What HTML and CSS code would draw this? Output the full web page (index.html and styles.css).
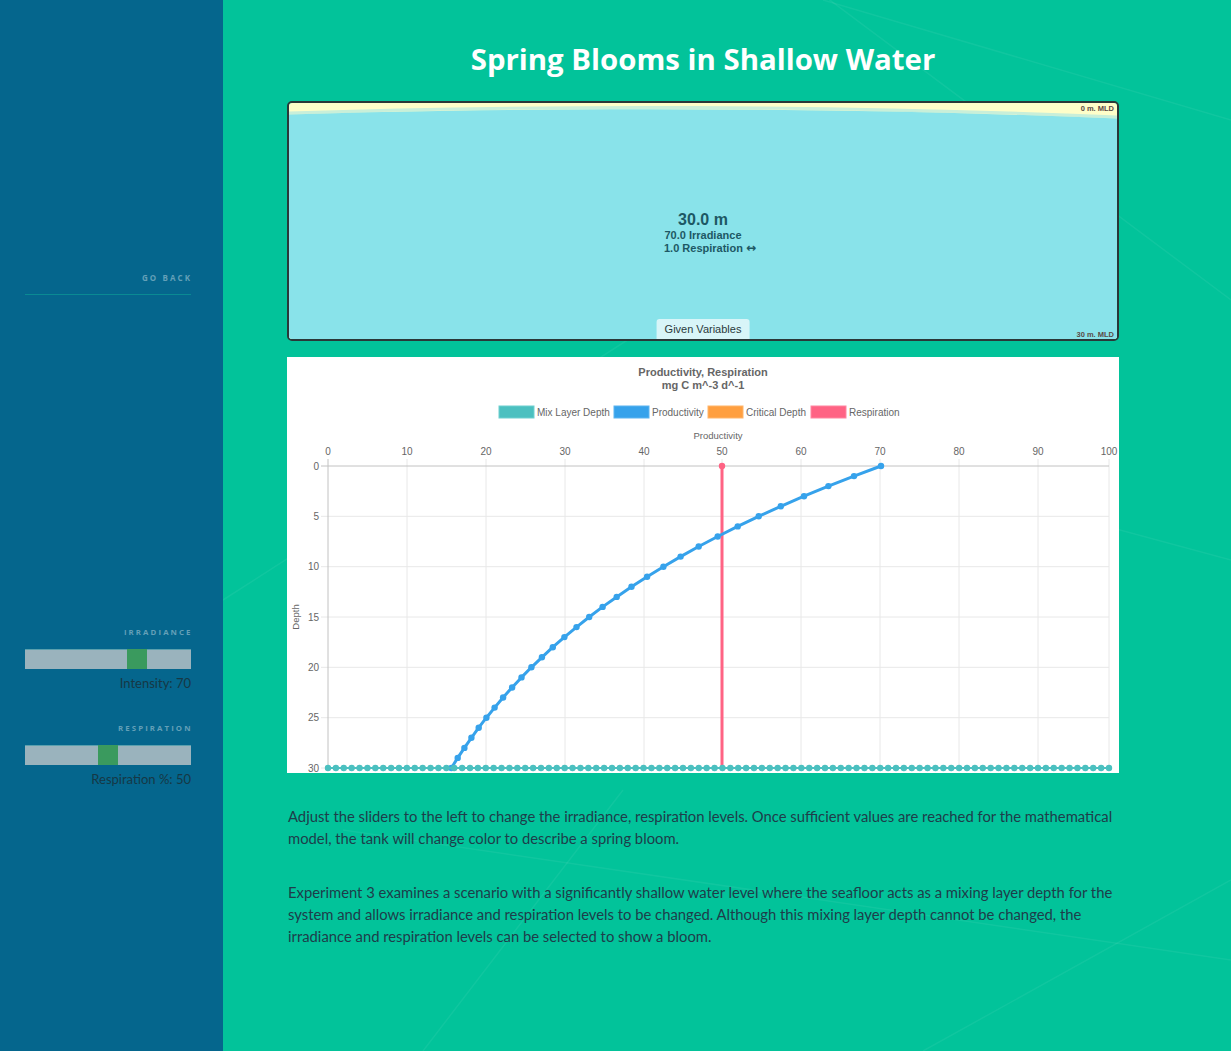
FILE: index.html
```html
<!DOCTYPE html>
<html lang="en">
<head>
<meta charset="utf-8">
<title>Spring Blooms in Shallow Water</title>
<link rel="stylesheet" href="styles.css">
</head>
<body>
<div class="page">
  <aside class="sidebar">
    <nav class="nav">
      <a class="go-back" href="#">GO BACK</a>
    </nav>
    <div class="controls">
      <div class="control">
        <label class="control-label" for="irr">IRRADIANCE</label>
        <input class="slider" id="irr" type="range" min="0" max="100" value="70">
        <div class="readout">Intensity: 70</div>
      </div>
      <div class="control">
        <label class="control-label" for="resp">RESPIRATION</label>
        <input class="slider" id="resp" type="range" min="0" max="100" value="50">
        <div class="readout">Respiration %: 50</div>
      </div>
    </div>
  </aside>

  <main class="main">
    <svg class="bg-lines" viewBox="0 0 1008 1051" preserveAspectRatio="none" aria-hidden="true">
      <line x1="580" y1="-20" x2="1008" y2="300"/>
      <line x1="600" y1="0" x2="1008" y2="120"/>
      <line x1="0" y1="600" x2="420" y2="330"/>
      <line x1="120" y1="830" x2="1008" y2="960"/>
      <line x1="400" y1="790" x2="200" y2="1051"/>
      <line x1="860" y1="520" x2="1008" y2="560"/>
      <line x1="700" y1="1051" x2="1008" y2="880"/>
    </svg>

    <h1 class="title">Spring Blooms in Shallow Water</h1>

    <section class="tank">
      <svg class="tank-water" viewBox="0 0 828 236" preserveAspectRatio="none" aria-hidden="true">
        <rect x="0" y="0" width="828" height="236" fill="#fefec9"/>
        <path d="M0 10 C250 2 550 2 828 14" fill="none" stroke="#c9efd9" stroke-width="3"/>
        <path d="M0 11.5 C250 4 550 4 828 15.5 L828 236 L0 236 Z" fill="#89e3ea"/>
      </svg>
      <span class="mld mld-top">0 m. MLD</span>
      <div class="tank-info">
        <div class="tank-depth">30.0 m</div>
        <div class="tank-line">70.0 Irradiance</div>
        <div class="tank-line tank-line-arrow">1.0 Respiration <span class="arrow">&#x2194;</span></div>
      </div>
      <div class="tank-tab">Given Variables</div>
      <span class="mld mld-bottom">30 m. MLD</span>
    </section>

    <section class="chart">
      <svg class="chart-svg" width="832" height="416" viewBox="0 0 832 416">
        <defs>
          <marker id="bdot" viewBox="-4 -4 8 8" markerWidth="8" markerHeight="8" markerUnits="userSpaceOnUse" refX="0" refY="0">
            <circle r="3.2" fill="#36a2eb"/>
          </marker>
        </defs>
        <g class="c-title">
          <text x="416" y="19">Productivity, Respiration</text>
          <text x="416" y="32">mg C m^-3 d^-1</text>
        </g>
        <g class="c-legend">
          <rect x="212" y="49" width="35" height="12" fill="#4bc0c0" stroke="#6fd0d0"/>
          <text x="250" y="59">Mix Layer Depth</text>
          <rect x="327" y="49" width="35" height="12" fill="#36a2eb" stroke="#5cb4f0"/>
          <text x="365" y="59">Productivity</text>
          <rect x="421" y="49" width="35" height="12" fill="#ff9f40" stroke="#ffb56b"/>
          <text x="459" y="59">Critical Depth</text>
          <rect x="524" y="49" width="35" height="12" fill="#ff6384" stroke="#ff86a0"/>
          <text x="562" y="59">Respiration</text>
        </g>
        <text class="c-axis-title" x="431" y="82">Productivity</text>
        <text class="c-axis-title" transform="translate(12 260) rotate(-90)">Depth</text>

        <g class="c-grid">
          <line x1="120" y1="102" x2="120" y2="411"/>
          <line x1="199" y1="102" x2="199" y2="411"/>
          <line x1="278" y1="102" x2="278" y2="411"/>
          <line x1="357" y1="102" x2="357" y2="411"/>
          <line x1="435" y1="102" x2="435" y2="411"/>
          <line x1="514" y1="102" x2="514" y2="411"/>
          <line x1="593" y1="102" x2="593" y2="411"/>
          <line x1="672" y1="102" x2="672" y2="411"/>
          <line x1="751" y1="102" x2="751" y2="411"/>
          <line x1="822" y1="102" x2="822" y2="411"/>
          <line x1="34" y1="159.3" x2="822" y2="159.3"/>
          <line x1="34" y1="209.7" x2="822" y2="209.7"/>
          <line x1="34" y1="260" x2="822" y2="260"/>
          <line x1="34" y1="310.3" x2="822" y2="310.3"/>
          <line x1="34" y1="360.7" x2="822" y2="360.7"/>
          <line x1="34" y1="411" x2="822" y2="411"/>
        </g>
        <g class="c-axis">
          <line x1="41" y1="102" x2="41" y2="411"/>
          <line x1="34" y1="109" x2="822" y2="109"/>
        </g>
        <g class="c-xticks">
          <text x="41" y="98">0</text>
          <text x="120" y="98">10</text>
          <text x="199" y="98">20</text>
          <text x="278" y="98">30</text>
          <text x="357" y="98">40</text>
          <text x="435" y="98">50</text>
          <text x="514" y="98">60</text>
          <text x="593" y="98">70</text>
          <text x="672" y="98">80</text>
          <text x="751" y="98">90</text>
          <text x="822" y="98">100</text>
        </g>
        <g class="c-yticks">
          <text x="32" y="112.5">0</text>
          <text x="32" y="162.8">5</text>
          <text x="32" y="213.2">10</text>
          <text x="32" y="263.5">15</text>
          <text x="32" y="313.8">20</text>
          <text x="32" y="364.2">25</text>
          <text x="32" y="414.5">30</text>
        </g>

        <line x1="435" y1="109" x2="435" y2="411" stroke="#ff6384" stroke-width="3"/>
        <circle cx="435" cy="109" r="3.2" fill="#ff6384"/>

        <polyline fill="none" stroke="#36a2eb" stroke-width="3" stroke-linejoin="round"
          marker-start="url(#bdot)" marker-mid="url(#bdot)" marker-end="url(#bdot)"
          points="594,109 567,119.1 541.4,129.1 517,139.2 493.8,149.3 471.7,159.3 450.7,169.4 430.7,179.5 411.7,189.5 393.6,199.6 376.4,209.7 360.1,219.7 344.5,229.8 329.7,239.9 315.6,249.9 302.2,260 289.5,270.1 277.4,280.1 265.8,290.2 254.9,300.3 244.4,310.3 234.5,320.4 225.1,330.5 216.1,340.5 207.6,350.6 199.4,360.7 191.7,370.7 184.4,380.8 177.4,390.9 170.7,400.9 164.4,411"/>

        <line x1="41" y1="411" x2="822" y2="411" stroke="#4bc0c0" stroke-width="2"/>
        <line x1="41" y1="411" x2="824" y2="411" stroke="#4bc0c0" stroke-width="6.4" stroke-linecap="round" stroke-dasharray="0 7.8889"/>
      </svg>
    </section>

    <p class="text">Adjust the sliders to the left to change the irradiance, respiration levels. Once sufficient values are reached for the mathematical model, the tank will change color to describe a spring bloom.</p>
    <p class="text">Experiment 3 examines a scenario with a significantly shallow water level where the seafloor acts as a mixing layer depth for the system and allows irradiance and respiration levels to be changed. Although this mixing layer depth cannot be changed, the irradiance and respiration levels can be selected to show a bloom.</p>
  </main>
</div>
</body>
</html>
```

FILE: styles.css
```css
* { box-sizing: border-box; }

html, body {
  margin: 0;
  padding: 0;
  height: 100%;
}

body {
  font-family: Lato, "Open Sans", sans-serif;
  background: #02c39a;
  color: #1e3d4a;
}

.page {
  display: flex;
  min-height: 1051px;
}

/* ---------- sidebar ---------- */
.sidebar {
  width: 223px;
  flex: 0 0 223px;
  background: #05668d;
  padding: 0 32px 0 25px;
}

.nav {
  margin-top: 265px;
  padding-bottom: 10px;
  border-bottom: 1px solid #0a8a93;
  text-align: right;
}

.go-back {
  display: inline-block;
  font-family: "Open Sans", sans-serif;
  font-size: 8px;
  line-height: 12px;
  font-weight: 700;
  letter-spacing: 2.1px;
  margin-right: -1.2px;
  color: #64a0b8;
  text-decoration: none;
}

.controls {
  margin-top: 331px;
  display: flex;
  flex-direction: column;
  gap: 31px;
}

.control {
  display: flex;
  flex-direction: column;
  align-items: stretch;
}

.control-label {
  display: block;
  text-align: right;
  font-family: "Open Sans", sans-serif;
  font-size: 7.8px;
  line-height: 12px;
  font-weight: 700;
  letter-spacing: 2.1px;
  margin-right: -1.6px;
  color: #64a0b8;
}

.slider {
  -webkit-appearance: none;
  appearance: none;
  display: block;
  width: 100%;
  height: 20px;
  margin: 11px 0 0;
  padding: 0;
  background: #9ab3bd;
  border: none;
  box-shadow: inset 0 1px 0 #5aa0ae;
  outline: none;
}

.slider::-webkit-slider-thumb {
  -webkit-appearance: none;
  appearance: none;
  width: 20px;
  height: 20px;
  background: #3a9a5e;
  border: none;
  border-radius: 0;
  cursor: pointer;
}

.readout {
  margin-top: 6px;
  text-align: right;
  font-size: 13px;
  line-height: 16px;
  color: #163845;
}

/* ---------- main ---------- */
.main {
  position: relative;
  flex: 1;
  overflow: hidden;
  padding: 39px 0 40px 64px;
}

.bg-lines {
  position: absolute;
  inset: 0;
  width: 100%;
  height: 100%;
  z-index: 0;
  pointer-events: none;
}

.bg-lines line {
  stroke: rgba(255, 255, 255, 0.06);
  stroke-width: 1.5;
}

.title,
.tank,
.chart,
.text {
  position: relative;
  z-index: 1;
  width: 832px;
}

.title {
  margin: 0;
  text-align: center;
  font-family: "Open Sans", sans-serif;
  font-size: 29.4px;
  line-height: 40px;
  font-weight: 700;
  color: #ffffff;
}

/* ---------- tank ---------- */
.tank {
  margin-top: 22px;
  height: 240px;
  border: 2px solid #2a3838;
  border-radius: 5px;
  overflow: hidden;
  padding-top: 24px;
  display: flex;
  flex-direction: column;
  align-items: center;
  justify-content: center;
  font-family: "Liberation Sans", Arial, sans-serif;
  color: #1d5864;
}

.tank-water {
  position: absolute;
  inset: 0;
  width: 100%;
  height: 100%;
  z-index: 0;
}

.tank-info {
  position: relative;
  z-index: 1;
  text-align: center;
}

.tank-depth {
  font-size: 16px;
  line-height: 18px;
  font-weight: 700;
}

.tank-line {
  font-size: 11px;
  line-height: 13px;
  font-weight: 700;
}

.tank-line-arrow {
  padding-left: 14px;
}

.arrow {
  font-family: "DejaVu Sans", sans-serif;
  font-weight: 700;
  font-size: 12px;
  line-height: 13px;
}

.tank-tab {
  position: absolute;
  z-index: 1;
  bottom: 0;
  left: 50%;
  transform: translateX(-50%);
  height: 20px;
  padding: 0 8px;
  line-height: 20px;
  font-size: 11px;
  color: #2b3a3c;
  background: #d8f5f8;
  border-radius: 3px 3px 0 0;
}

.mld {
  position: absolute;
  z-index: 1;
  right: 3px;
  font-size: 7.5px;
  line-height: 9px;
  font-weight: 700;
  color: #5a4b46;
}

.mld-top { top: 1px; }
.mld-bottom { bottom: 0; }

/* ---------- chart ---------- */
.chart {
  margin-top: 16px;
  height: 416px;
  background: #ffffff;
  overflow: hidden;
}

.chart-svg {
  display: block;
  font-family: "Liberation Sans", Arial, sans-serif;
}

.c-title text {
  font-size: 11px;
  font-weight: 700;
  fill: #666666;
  text-anchor: middle;
}

.c-legend text {
  font-size: 10px;
  fill: #666666;
}

.c-axis-title {
  font-size: 9.5px;
  fill: #666666;
  text-anchor: middle;
}

.c-grid line {
  stroke: #e8e8e8;
  stroke-width: 1;
}

.c-axis line {
  stroke: #c2c2c2;
  stroke-width: 1;
}

.c-xticks text {
  font-size: 10px;
  fill: #666666;
  text-anchor: middle;
}

.c-yticks text {
  font-size: 10px;
  fill: #666666;
  text-anchor: end;
}

/* ---------- text ---------- */
.text {
  margin: 32px 0 0;
  padding-left: 1px;
  font-size: 14.8px;
  line-height: 22px;
  color: #1e3d4a;
}
```
